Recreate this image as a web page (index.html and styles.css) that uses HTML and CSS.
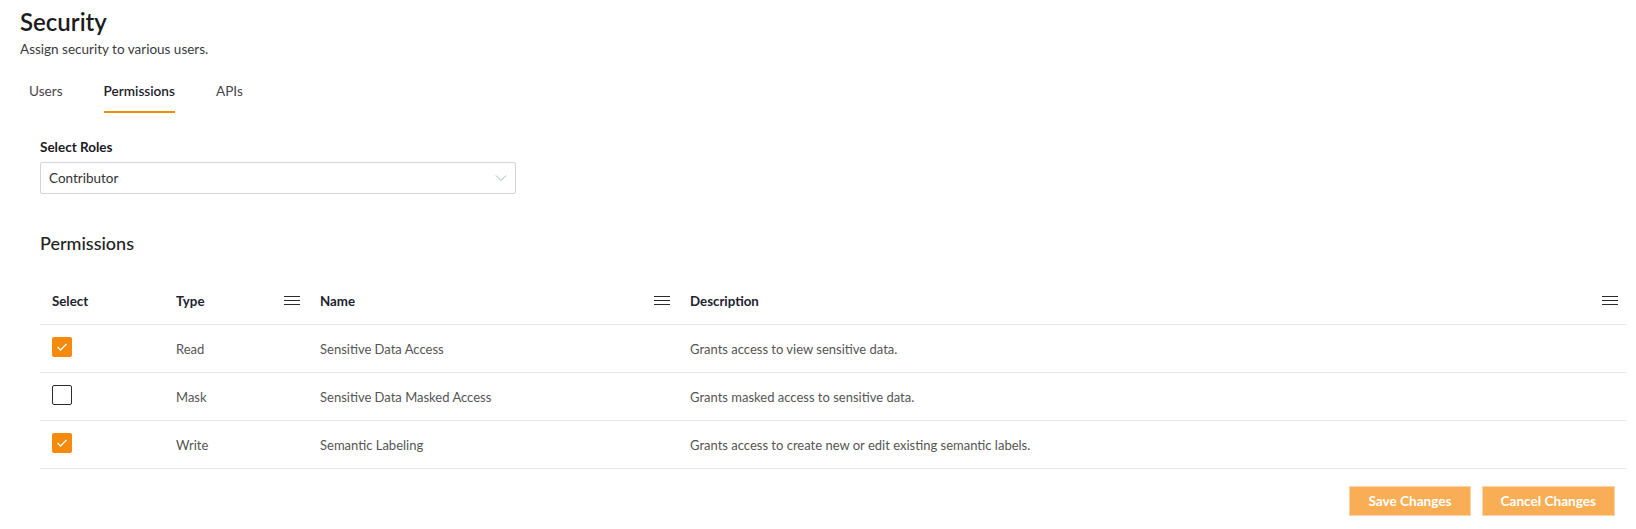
FILE: index.html
```html
<!DOCTYPE html>
<html lang="en">
<head>
<meta charset="utf-8">
<title>Security</title>
<link rel="stylesheet" href="styles.css">
</head>
<body>
<div class="page">
  <header class="page-head">
    <h1 class="title">Security</h1>
    <p class="subtitle">Assign security to various users.</p>
  </header>
  <nav class="tabs">
    <span class="tab">Users</span>
    <span class="tab tab-active">Permissions</span>
    <span class="tab">APIs</span>
  </nav>
  <section class="content">
    <label class="field-label">Select Roles</label>
    <div class="select">
      <span class="select-value">Contributor</span>
      <svg class="chevron" width="12" height="8" viewBox="0 0 12 8"><polyline points="1,1.5 6,6.5 11,1.5" fill="none" stroke="#a7b1c2" stroke-width="1"/></svg>
    </div>
    <h2 class="section-title">Permissions</h2>
    <div class="table">
      <div class="row row-head">
        <div class="cell">Select</div>
        <div class="cell cell-menu">Type<svg class="menu" width="16" height="10" viewBox="0 0 16 10"><path d="M0 0.5H16M0 4.5H16M0 8.5H16" stroke="#2a2a33" stroke-width="1"/></svg></div>
        <div class="cell cell-menu">Name<svg class="menu" width="16" height="10" viewBox="0 0 16 10"><path d="M0 0.5H16M0 4.5H16M0 8.5H16" stroke="#2a2a33" stroke-width="1"/></svg></div>
        <div class="cell cell-menu">Description<svg class="menu" width="16" height="10" viewBox="0 0 16 10"><path d="M0 0.5H16M0 4.5H16M0 8.5H16" stroke="#2a2a33" stroke-width="1"/></svg></div>
      </div>
      <div class="row">
        <div class="cell"><span class="check checked"><svg width="12" height="10" viewBox="0 0 12 10"><polyline points="1.5,5 4.5,8 10.5,2" fill="none" stroke="#fff" stroke-width="1.3"/></svg></span></div>
        <div class="cell">Read</div>
        <div class="cell">Sensitive Data Access</div>
        <div class="cell">Grants access to view sensitive data.</div>
      </div>
      <div class="row">
        <div class="cell"><span class="check"></span></div>
        <div class="cell">Mask</div>
        <div class="cell">Sensitive Data Masked Access</div>
        <div class="cell">Grants masked access to sensitive data.</div>
      </div>
      <div class="row">
        <div class="cell"><span class="check checked"><svg width="12" height="10" viewBox="0 0 12 10"><polyline points="1.5,5 4.5,8 10.5,2" fill="none" stroke="#fff" stroke-width="1.3"/></svg></span></div>
        <div class="cell">Write</div>
        <div class="cell">Semantic Labeling</div>
        <div class="cell">Grants access to create new or edit existing semantic labels.</div>
      </div>
    </div>
    <div class="actions">
      <button class="btn">Save Changes</button>
      <button class="btn">Cancel Changes</button>
    </div>
  </section>
</div>
</body>
</html>
```

FILE: styles.css
```css
* { box-sizing: border-box; }
html, body { margin: 0; padding: 0; background: #fff; }
body {
  font-family: Lato, "Liberation Sans", sans-serif;
  color: #333;
  font-size: 14px;
}
.page { padding: 8px 10px 0 20px; }
.title {
  margin: 0;
  font-size: 24px;
  line-height: 28px;
  font-weight: 600;
  color: #1c1c1f;
}
.subtitle {
  margin: 4px 0 0;
  font-size: 13.5px;
  line-height: 18px;
  color: #3a3a40;
}
.tabs {
  display: flex;
  gap: 41px;
  margin-top: 24px;
  padding-left: 9px;
}
.tab {
  font-size: 13.6px;
  line-height: 18px;
  color: #45454c;
  padding-bottom: 11px;
  border-bottom: 2px solid transparent;
}
.tab-active {
  color: #1e1e2a;
  font-weight: 600;
  border-bottom-color: #f38b00;
}
.content {
  padding-left: 20px;
  display: flex;
  flex-direction: column;
}
.field-label {
  margin-top: 26px;
  font-size: 13.5px;
  line-height: 16px;
  font-weight: 700;
  color: #1a1a1f;
}
.select {
  margin-top: 7px;
  width: 476px;
  height: 32px;
  border: 1px solid #d3d4dc;
  border-radius: 2px;
  display: flex;
  align-items: center;
  justify-content: space-between;
  padding: 0 8px 0 8px;
}
.select-value { font-size: 13.5px; color: #333; }
.chevron { margin-top: -1px; }
.section-title {
  margin: 38px 0 0;
  font-size: 18px;
  line-height: 22px;
  font-weight: 500;
  color: #222;
}
.table { margin-top: 23px; width: 1586px; }
.row {
  display: grid;
  grid-template-columns: 124px 144px 370px 1fr;
  height: 48px;
  border-bottom: 1px solid #e7e7e7;
}
.cell {
  display: flex;
  align-items: center;
  padding-left: 12px;
  font-size: 13px;
  color: #555;
}
.row-head .cell {
  font-weight: 700;
  font-size: 13.3px;
  color: #1e2230;
}
.cell-menu { justify-content: space-between; padding-right: 8px; }
.menu { display: block; }
.check {
  width: 20px;
  height: 20px;
  border: 1.5px solid #2c2c2c;
  border-radius: 2px;
  display: flex;
  align-items: center;
  justify-content: center;
  margin-top: -3px;
}
.check.checked { background: #f78a0d; border-color: #f78a0d; }
.actions {
  display: flex;
  justify-content: flex-end;
  gap: 11px;
  margin-top: 17px;
  width: 1575px;
}
.btn {
  height: 30px;
  padding: 0 18px;
  border: 1px solid #fbd3a5;
  background: #f9ad54;
  color: #fff;
  font-family: Lato, "Liberation Sans", sans-serif;
  font-weight: 700;
  font-size: 13.6px;
}
```
